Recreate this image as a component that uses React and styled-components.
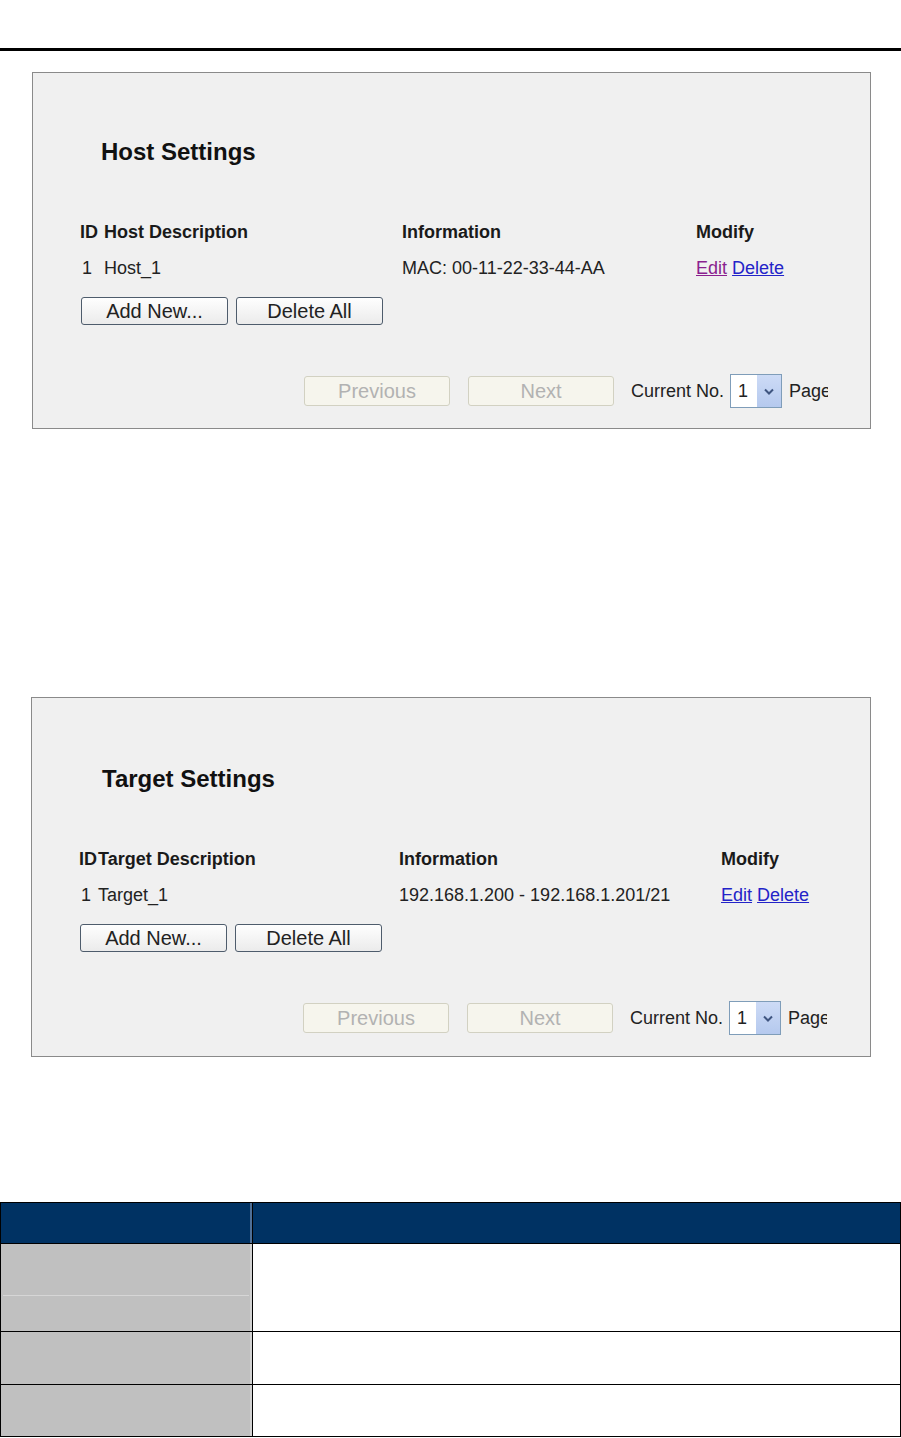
import styled, { createGlobalStyle } from "styled-components";

const GlobalStyle = createGlobalStyle`
    html, body {
        margin: 0;
        padding: 0;
        background: #ffffff;
    }
    body {
        font-family: "Liberation Sans", Arial, sans-serif;
        color: #1e1e1e;
    }
`;

const Page = styled.div`
    width: 901px;
    height: 1438px;
    overflow: hidden;
`;

const TopRule = styled.div`
    margin-top: 48px;
    height: 3px;
    background: #000;
`;

const Panel = styled.div`
    box-sizing: border-box;
    margin-top: ${(p) => p.gap}px;
    margin-left: ${(p) => p.left}px;
    width: ${(p) => 870 - p.left + 1}px;
    border: 1px solid #8a8a8a;
    background: #f0f0f0;
    padding: ${(p) => p.padTop}px 0 ${(p) => p.padBottom}px 47px;
`;

const Title = styled.h2`
    margin: 0 0 0 ${(p) => p.indent}px;
    font-size: 24px;
    line-height: 28px;
    font-weight: bold;
    color: #111;
`;

const ListGrid = styled.div`
    display: grid;
    grid-template-columns: ${(p) => p.cols};
    grid-auto-rows: 36px;
    margin-top: 48px;
    align-items: center;
    font-size: 18px;
`;

const HeadCell = styled.div`
    font-weight: bold;
    color: #1a1a1a;
    white-space: nowrap;
`;

const Cell = styled.div`
    color: #222;
    white-space: nowrap;
    padding-left: ${(p) => p.pad || 0}px;
`;

const Link = styled.a`
    color: ${(p) => (p.visited ? "#8a1f8f" : "#2323c8")};
    text-decoration: underline;
    cursor: pointer;
`;

const ButtonRow = styled.div`
    display: flex;
    gap: 8px;
    margin-top: 11px;
    margin-left: ${(p) => p.shift}px;
`;

const ActionButton = styled.button`
    box-sizing: border-box;
    width: 147px;
    height: 28px;
    padding: 0;
    border: 1px solid #4e5c6c;
    border-radius: 3px;
    background: linear-gradient(#fefefe, #ebebeb);
    font-family: "Liberation Sans", Arial, sans-serif;
    font-size: 20px;
    line-height: 26px;
    color: #222;
`;

const Pager = styled.div`
    display: flex;
    align-items: center;
    width: 748px;
    height: 34px;
    overflow: hidden;
    margin-top: ${(p) => p.gap}px;
    font-size: 18px;
    white-space: nowrap;
`;

const PagerButton = styled.button`
    box-sizing: border-box;
    flex: none;
    width: 146px;
    height: 30px;
    padding: 0;
    border: 1px solid #d2d1c2;
    border-radius: 3px;
    background: #f6f5ed;
    font-family: "Liberation Sans", Arial, sans-serif;
    font-size: 20px;
    color: #b2b2b2;
    margin-left: ${(p) => p.offset}px;
`;

const PagerLabel = styled.span`
    flex: none;
    color: #222;
    margin-left: ${(p) => p.offset}px;
`;

const Select = styled.div`
    box-sizing: border-box;
    flex: none;
    display: flex;
    width: 52px;
    height: 34px;
    margin-left: 6px;
    border: 1px solid #7f9db9;
    background: #fff;
`;

const SelectValue = styled.span`
    flex: 1;
    padding-left: 7px;
    line-height: 32px;
    color: #222;
`;

const SelectArrow = styled.span`
    width: 24px;
    display: flex;
    align-items: center;
    justify-content: center;
    background: linear-gradient(#cddbf6, #b5c9ee);
`;

const Chevron = () => (
    <svg width="10" height="7" viewBox="0 0 10 7">
        <path d="M1 1.5 L5 5.5 L9 1.5" fill="none" stroke="#3f5580" strokeWidth="2" />
    </svg>
);

const SettingsPanel = ({ title, cols, head, row, modifyVisited, layout }) => (
    <Panel gap={layout.gap} left={layout.left} padTop={layout.padTop} padBottom={layout.padBottom}>
        <Title indent={layout.titleIndent}>{title}</Title>
        <ListGrid cols={cols}>
            <HeadCell>ID</HeadCell>
            <HeadCell>{head}</HeadCell>
            <HeadCell>Information</HeadCell>
            <HeadCell>Modify</HeadCell>
            <Cell pad={2}>1</Cell>
            <Cell>{row.name}</Cell>
            <Cell>{row.info}</Cell>
            <Cell>
                <Link visited={modifyVisited}>Edit</Link> <Link>Delete</Link>
            </Cell>
        </ListGrid>
        <ButtonRow shift={layout.buttonShift}>
            <ActionButton>Add New...</ActionButton>
            <ActionButton>Delete All</ActionButton>
        </ButtonRow>
        <Pager gap={layout.pagerGap}>
            <PagerButton offset={224 + layout.buttonShift - 1}>Previous</PagerButton>
            <PagerButton offset={18}>Next</PagerButton>
            <PagerLabel offset={17}>Current No.</PagerLabel>
            <Select>
                <SelectValue>1</SelectValue>
                <SelectArrow>
                    <Chevron />
                </SelectArrow>
            </Select>
            <PagerLabel offset={7}>Page</PagerLabel>
        </Pager>
    </Panel>
);

const InfoTable = styled.div`
    display: grid;
    grid-template-columns: 252px 648px;
    grid-template-rows: 41px 88px 53px 52px;
    margin-top: 145px;
    border-top: 1px solid #000;
    border-left: 1px solid #000;
`;

const HeadBox = styled.div`
    background: #003263;
    border-right: 1px solid #000;
    border-bottom: 1px solid #000;
    box-shadow: ${(p) => (p.first ? "inset -2px 0 0 #4f6f96" : "none")};
`;

const LabelBox = styled.div`
    display: flex;
    flex-direction: column;
    background: #c0c0c0;
    border-right: 1px solid #000;
    border-bottom: 1px solid #000;
    box-shadow: inset -2px 0 0 #d2d2d2;
`;

const SubLabel = styled.div`
    height: ${(p) => p.h}px;
    margin: 0 3px 0 2px;
    border-bottom: ${(p) => (p.divided ? "1px solid #d6d6d6" : "none")};
`;

const TextBox = styled.div`
    background: #fff;
    border-right: 1px solid #000;
    border-bottom: 1px solid #000;
`;

export default function App() {
    return (
        <Page>
            <GlobalStyle />
            <TopRule />
            <SettingsPanel
                title="Host Settings"
                head="Host Description"
                cols="24px 298px 294px 1fr"
                row={{ name: "Host_1", info: "MAC: 00-11-22-33-44-AA" }}
                modifyVisited
                layout={{ gap: 21, left: 32, padTop: 65, padBottom: 20, titleIndent: 21, buttonShift: 1, pagerGap: 49 }}
            />
            <SettingsPanel
                title="Target Settings"
                head="Target Description"
                cols="19px 301px 322px 1fr"
                row={{ name: "Target_1", info: "192.168.1.200 - 192.168.1.201/21" }}
                layout={{ gap: 268, left: 31, padTop: 67, padBottom: 21, titleIndent: 23, buttonShift: 1, pagerGap: 49 }}
            />
            <InfoTable>
                <HeadBox first />
                <HeadBox />
                <LabelBox>
                    <SubLabel h={51} divided />
                </LabelBox>
                <TextBox />
                <LabelBox />
                <TextBox />
                <LabelBox />
                <TextBox />
            </InfoTable>
        </Page>
    );
}
